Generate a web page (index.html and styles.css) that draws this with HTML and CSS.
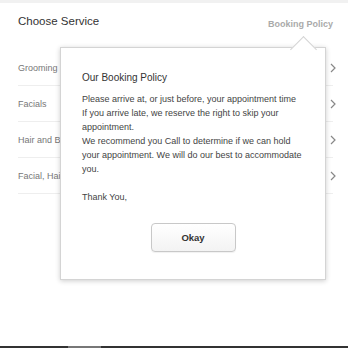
FILE: index.html
```html
<!DOCTYPE html>
<html>
<head>
<meta charset="utf-8">
<link rel="stylesheet" href="styles.css">
</head>
<body>
<div class="page">
  <div class="topstrip"></div>
  <div class="header">
    <div class="title">Choose Service</div>
    <div class="policy-link">Booking Policy</div>
  </div>
  <ul class="list">
    <li class="row"><span>Grooming</span><svg class="chev" width="6" height="10" viewBox="0 0 6 10"><polyline points="1,1 5,5 1,9" fill="none" stroke="#888" stroke-width="1.2"/></svg></li>
    <li class="row"><span>Facials</span><svg class="chev" width="6" height="10" viewBox="0 0 6 10"><polyline points="1,1 5,5 1,9" fill="none" stroke="#888" stroke-width="1.2"/></svg></li>
    <li class="row"><span>Hair and Beauty</span><svg class="chev" width="6" height="10" viewBox="0 0 6 10"><polyline points="1,1 5,5 1,9" fill="none" stroke="#888" stroke-width="1.2"/></svg></li>
    <li class="row"><span>Facial, Hair and Makeup</span><svg class="chev" width="6" height="10" viewBox="0 0 6 10"><polyline points="1,1 5,5 1,9" fill="none" stroke="#888" stroke-width="1.2"/></svg></li>
  </ul>
  <div class="spacer"></div>
  <div class="footer"><div class="footer-thumb"></div></div>

  <div class="popover">
    <div class="arrow"></div>
    <div class="pop-title">Our Booking Policy</div>
    <p class="pop-text">Please arrive at, or just before, your appointment time<br>If you arrive late, we reserve the right to skip your appointment.<br>We recommend you Call to determine if we can hold your appointment. We will do our best to accommodate you.<br><br>Thank You,</p>
    <div class="pop-actions"><button class="okay">Okay</button></div>
  </div>
</div>
</body>
</html>
```
FILE: styles.css
```css
html, body {
  margin: 0;
  padding: 0;
  background: #fff;
}
body {
  font-family: "Liberation Sans", Arial, sans-serif;
}
.page {
  position: relative;
  width: 348px;
  height: 348px;
  display: flex;
  flex-direction: column;
  overflow: hidden;
}
.topstrip {
  height: 3px;
  background: #f1f1f1;
}
.header {
  height: 47px;
  display: flex;
  justify-content: space-between;
  align-items: baseline;
  padding: 0 15px 0 18px;
  box-sizing: border-box;
}
.title {
  font-size: 11.5px;
  color: #333;
  padding-top: 12px;
}
.policy-link {
  font-size: 9px;
  font-weight: bold;
  color: #aaa;
  position: relative;
  top: 2px;
}
.list {
  list-style: none;
  margin: 0 15px 0 18px;
  padding: 0;
}
.row {
  height: 36px;
  display: flex;
  align-items: center;
  justify-content: space-between;
  border-bottom: 1px solid #eee;
  box-sizing: border-box;
  font-size: 9px;
  color: #777;
}
.chev {
  margin-right: -3px;
}
.spacer {
  flex: 1;
}
.footer {
  height: 2px;
  background: #333;
  position: relative;
}
.footer-thumb {
  margin-left: 68px;
  width: 33px;
  height: 2px;
  background: #777;
}
.popover {
  position: absolute;
  left: 60px;
  top: 47px;
  width: 266px;
  height: 233px;
  box-sizing: border-box;
  background: #fff;
  border: 1px solid #d4d4d4;
  box-shadow: 0 1px 5px rgba(0,0,0,0.2);
  padding: 24px 21px 0 21px;
}
.arrow {
  position: absolute;
  top: -8px;
  left: 233px;
  width: 18px;
  height: 18px;
  background: #fff;
  border-left: 1px solid #d4d4d4;
  border-top: 1px solid #d4d4d4;
  transform: rotate(45deg);
}
.pop-title {
  position: relative;
  font-size: 10px;
  color: #333;
}
.pop-text {
  margin: 9px 0 0 0;
  font-size: 9px;
  line-height: 14px;
  color: #444;
}
.pop-actions {
  display: flex;
  justify-content: center;
  margin-top: 19px;
}
.okay {
  width: 85px;
  height: 29px;
  border: 1px solid #c8c8c8;
  border-radius: 4px;
  background: linear-gradient(#ffffff, #f3f3f3);
  font-family: "Liberation Sans", Arial, sans-serif;
  font-size: 9.5px;
  font-weight: bold;
  color: #333;
  box-shadow: 0 1px 1px rgba(0,0,0,0.06);
}
```
